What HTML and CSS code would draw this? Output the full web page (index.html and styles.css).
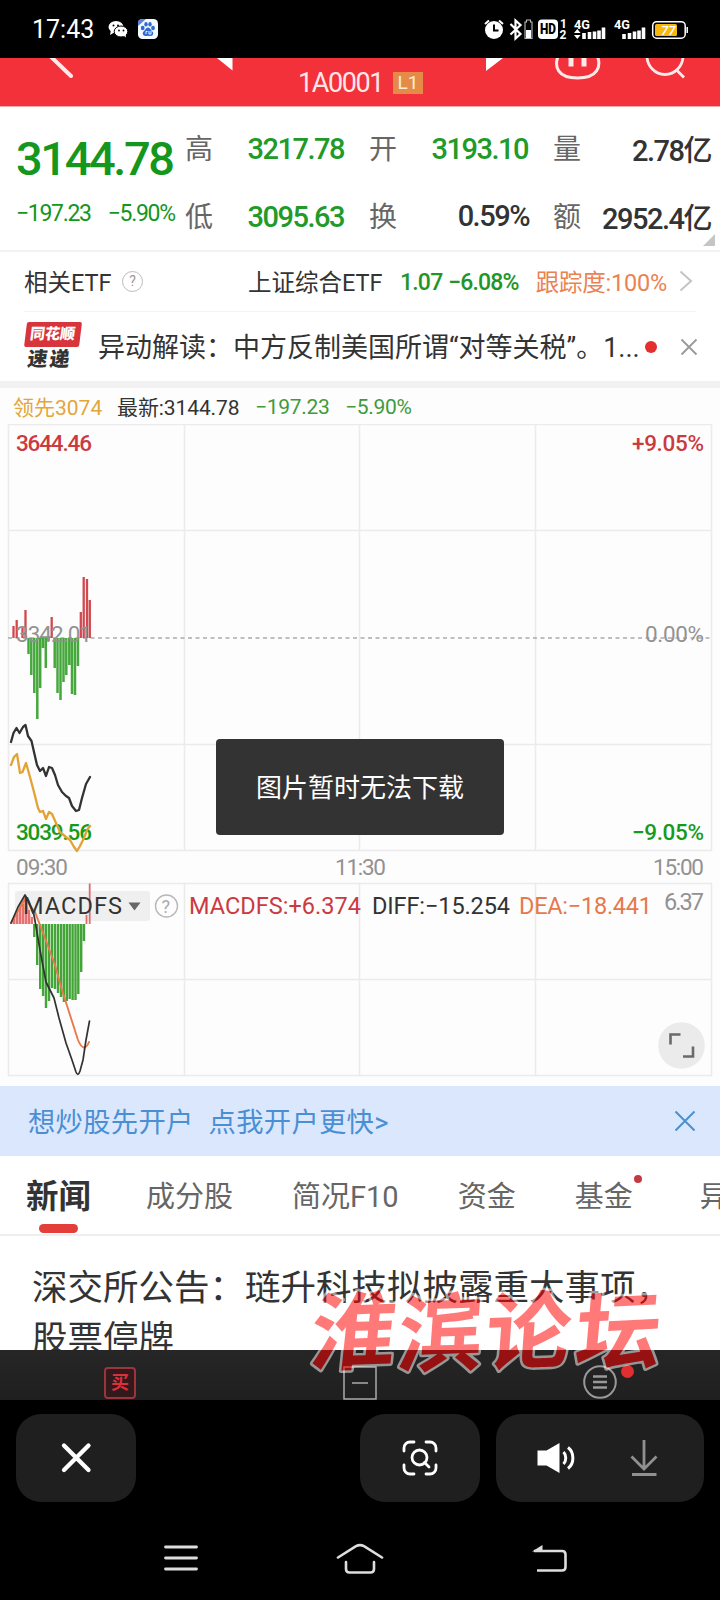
FILE: index.html
```html
<!DOCTYPE html>
<html lang="zh-CN">
<head>
<meta charset="utf-8">
<title>1A0001</title>
<link rel="stylesheet" href="styles.css">
</head>
<body>
<div class="screen">
  <header class="status">
    <span class="clock">17:43</span>
    <svg class="status-apps" width="52" height="22" viewBox="108 18 52 22">
      <ellipse cx="116" cy="27" rx="7.500" ry="6" fill="#fff"/><path d="M111 30l-1 5 5-3z" fill="#fff"/>
      <ellipse cx="121" cy="31.500" rx="6.800" ry="5.500" fill="#fff" stroke="#000" stroke-width="1"/><path d="M123 35l3 2.500-.5-4z" fill="#fff"/>
      <g fill="#000"><circle cx="113.500" cy="25.500" r="1"/><circle cx="118" cy="25.500" r="1"/><circle cx="119" cy="30.500" r=".9"/><circle cx="123.500" cy="30.500" r=".9"/></g>
      <rect x="138" y="19" width="20" height="20" rx="4.500" fill="#f4f8ff"/>
      <path d="M138 26v-3a4 4 0 0 1 4-4h4z" fill="#5a86d8"/>
      <g fill="#2f6bd0"><ellipse cx="142.700" cy="28" rx="1.900" ry="2.300"/><ellipse cx="146" cy="24.300" rx="1.700" ry="2.300"/><ellipse cx="150" cy="24.300" rx="1.700" ry="2.300"/><ellipse cx="153" cy="28" rx="1.900" ry="2.300"/><path d="M148 27.500c2 0 3 3 5 4.500 1 3-1 4.500-5 3.700-4 .8-6-.7-5-3.700 2-1.500 3-4.500 5-4.500z"/></g>
      <path d="M146 34v-2.500h1.500M149 31v3h2v-3" fill="none" stroke="#fff" stroke-width=".9"/>
    </svg>
    <svg class="status-signals" width="210" height="24" viewBox="482 17 210 24">
      <circle cx="494" cy="30" r="9" fill="#fff"/><path d="M494 24.500v6h4.500" stroke="#000" stroke-width="2" fill="none"/>
      <path d="M485 24l4-3.500M503 24l-4-3.500" stroke="#fff" stroke-width="2"/>
      <path d="M510.500 24l10 10-5 4.500V20.500l5 4.500-10 9.500" fill="none" stroke="#fff" stroke-width="2.200"/>
      <path d="M525 38.500V22h1.500v-2h4v2h1.500v16.500z" fill="none" stroke="#bbb" stroke-width="1.100"/><path d="M526 30h5v8h-5z" fill="#fff"/>
      <rect x="538" y="19.500" width="20" height="19.500" rx="4" fill="#fff"/>
      <text class="hd" x="540" y="34" textLength="16" lengthAdjust="spacingAndGlyphs">HD</text>
      <text class="sim" x="560" y="28">1</text><text class="sim" x="559.500" y="39">2</text>
      <text class="net" x="574" y="29" textLength="16" lengthAdjust="spacingAndGlyphs">4G</text>
      <text class="net" x="614" y="29" textLength="16" lengthAdjust="spacingAndGlyphs">4G</text>
      <path d="M574 33l3.300-4 3.300 4zM574 35l3.300 4 3.300-4z" fill="#fff"/>
      <path d="M584 39v-6M589.500 39v-7M594.500 39v-7.500M599 39v-8.500M603.500 39v-11.500M624 39v-5M629.500 39v-6M634.500 39v-7.500M639 39v-8.500M643.500 39v-11.500" stroke="#fff" stroke-width="3.600"/>
      <rect x="652.700" y="21.700" width="32.500" height="16.500" rx="4" fill="none" stroke="#fff" stroke-width="1.500"/>
      <rect x="655" y="24" width="22" height="12" rx="1.500" fill="#f6b70f"/><path d="M687.200 27v6" stroke="#fff" stroke-width="1.500"/>
      <text class="pct" x="661" y="35">77</text>
    </svg>
  </header>

  <div class="titlebar">
    <svg class="titlebar-icons" width="720" height="24" viewBox="0 58 720 24" fill="none" stroke="#ffe9e9">
      <path d="M45 51L71 76" stroke-width="4" stroke-linecap="round"/>
      <path d="M217 58h15.500v12.500zM486 58h17l-17 13z" fill="#fff" stroke="none"/>
      <path d="M559 54c-6 13-1 24 18.500 24s25-11 19-24" stroke-width="3"/>
      <path d="M571 58v8.500M584 58v8.500" stroke-width="5"/>
      <path d="M647 56a18 18.500 0 0 0 36 0M676 69.500l8 8" stroke-width="2.800"/>
    </svg>
    <span class="code">1A0001</span><span class="level">L1</span>
  </div>

  <section class="quote">
    <div class="price">
      <div class="price-now">3144.78</div>
      <div class="price-change"><span>−197.23</span><span>−5.90%</span></div>
    </div>
    <dl class="stats">
      <div><dt>高</dt><dd class="down">3217.78</dd></div>
      <div><dt>开</dt><dd class="down">3193.10</dd></div>
      <div><dt>量</dt><dd>2.78亿</dd></div>
      <div><dt>低</dt><dd class="down">3095.63</dd></div>
      <div><dt>换</dt><dd>0.59%</dd></div>
      <div><dt>额</dt><dd>2952.4亿</dd></div>
    </dl>
    <i class="corner"></i>
  </section>

  <section class="etf">
    <span class="etf-label">相关ETF</span><span class="help">?</span>
    <span class="etf-name">上证综合ETF</span>
    <span class="etf-num etf-price">1.07</span><span class="etf-num">−6.08%</span>
    <span class="etf-track">跟踪度:100%</span>
    <svg class="chevron" width="14" height="22" viewBox="0 0 14 22" fill="none" stroke="#c4c4c4" stroke-width="2"><path d="M1.500 1.500L12 11 1.500 20.500"/></svg>
  </section>

  <section class="flash">
    <div class="flash-logo"><b class="flash-brand">同花顺</b><b class="flash-sub">速递</b></div>
    <span class="flash-title">异动解读：中方反制美国所谓“对等关税”。1...</span>
    <i class="flash-dot"></i>
    <svg class="flash-close" width="18" height="18" viewBox="0 0 18 18" stroke="#999" stroke-width="1.800"><path d="M1.500 1.500l15 15M16.500 1.500l-15 15"/></svg>
  </section>

  <div class="legend">
    <span class="lead">领先3074</span><span class="last">最新:3144.78</span><span class="chg">−197.23</span><span class="chg">−5.90%</span>
  </div>

  <div class="charts">
    <svg width="720" height="662" viewBox="0 424 720 662">
      <g class="grid-line">
        <path d="M8.500 424.500h703v426h-703zM184.500 424.500v426M359.500 424.500v426M535.500 424.500v426M8.500 530.500h703M8.500 744.500h703"/>
        <path d="M8.500 883.500h703v192h-703zM184.500 883.500v192M359.500 883.500v192M535.500 883.500v192M8.500 979.500h703"/>
      </g>
      <path d="M8 638h703" stroke="#aaa" stroke-width="1.300" stroke-dasharray="4 3.500"/>
      <path d="M13.500 638V626M16.700 638V620M22.500 638V628M25.500 638V610M51.700 638V617M80.800 638V612M83.700 638V577M87 638V579M89.800 638V600" stroke="#d0494f" stroke-width="2.300"/>
      <path d="M28.500 638V654M31.300 638V675M34.300 638V693M37.300 638V719M40.200 638V688M43 638V648M45.800 638V668M48.600 638V641M54.700 638V668M57.500 638V693M60.500 638V700M63.500 638V682M66.300 638V675M69.300 638V665M72 638V694M75 638V695M78 638V666" stroke="#46a83c" stroke-width="2.500"/>
      <path d="M11 742L13.500 733L16.500 728L19.500 733L23 727L25.500 725L28 736L31.500 741L34 752L37 765L40 771L43 768L46 776L49 767L52 768L55 775L58 785L62 792L66 796L69 798L72 806L76 811L79 810L82 798L86 784L90 777" class="line dark"/>
      <g class="ticks">
        <text x="16" y="451" textLength="76" class="up">3644.46</text>
        <text x="632" y="451" textLength="72" class="up">+9.05%</text>
        <text x="16" y="642" textLength="76">3342.01</text>
        <text x="645" y="642" textLength="59">0.00%</text>
        <text x="16" y="840" textLength="76" class="dn">3039.56</text>
        <text x="632" y="840" textLength="72" class="dn">−9.05%</text>
        <text x="16" y="875" textLength="52">09:30</text>
        <text x="335" y="875" textLength="51">11:30</text>
        <text x="653" y="875" textLength="51">15:00</text>
      </g>
      <path d="M11 765L14 757L17 754L20 773L22.500 772L26 763L30 777L34 792L38 808L40 812L43 811L46 819L49 812L52 814L56 823L60 832L66 837L70 840L74 847L77 851L80 846L84 838L87 830L90 826" class="line gold"/>

      <rect x="15" y="891" width="135" height="30" rx="3" fill="#efefef"/>
      <path d="M11 924L25 895L33 924z" fill="#f6b0b0"/>
      <path d="M14 924v-6M17 924v-12M20 924v-16M23 924v-20M26 924v-22M29 924v-14M32 924v-7M86.500 924v-9M89.700 924V883.500" stroke="#e36a6a" stroke-width="1.800"/>
      <path d="M34.300 924V937M37.200 924V965M40.200 924V989M43.100 924V996M46 924V1008M49 924V1001M52 924V988M55 924V989M58 924V993M61 924V997M63.900 924V1002M66.800 924V1001M69.700 924V999M72.600 924V1000M75.500 924V1000M78.300 924V994M81.200 924V972M84 924V941" stroke="#43a438" stroke-width="2.400"/>
      <path d="M11 923L25 899L35 912L45 938L55 965L62 990L70 1015L78 1040Q84 1054 89 1042" class="line coral"/>
      <path d="M11 923L18 907L25 895L29 902L34 915L40 950L46 982L49 988L54 998L59 1018L66 1043L72 1060L76 1072Q78 1077 80 1071L83 1060L86 1040L89.500 1021" class="line thin"/>
      <g class="macd">
        <text x="23" y="914" textLength="99" fill="#333">MACDFS</text>
        <path d="M128.500 902.500h12l-6 8z" fill="#666"/>
        <circle cx="166.500" cy="906" r="11" fill="none" stroke="#b8b8b8" stroke-width="1.400"/>
        <text x="161.500" y="912.500" class="q">?</text>
        <text x="189" y="914" textLength="172" fill="#cb3a40">MACDFS:+6.374</text>
        <text x="372" y="914" textLength="138" fill="#333">DIFF:−15.254</text>
        <text x="519" y="914" textLength="133" fill="#e57a4c">DEA:−18.441</text>
        <text x="664" y="910" textLength="40" fill="#929292">6.37</text>
      </g>
      <circle cx="681.500" cy="1045.500" r="23.300" fill="#ebebeb"/>
      <path d="M670.500 1044.500v-10h10M683 1056.500h10v-10" fill="none" stroke="#6a6a6a" stroke-width="2.600"/>
    </svg>
    <div class="toast">图片暂时无法下载</div>
  </div>

  <div class="banner">
    <span>想炒股先开户</span><span>点我开户更快&gt;</span>
    <svg class="banner-close" width="22" height="22" viewBox="0 0 22 22" stroke="#4a90d2" stroke-width="2"><path d="M1.500 1.500l19 19M20.500 1.500l-19 19"/></svg>
  </div>

  <nav class="tabs">
    <span class="tab active">新闻</span><span class="tab">成分股</span><span class="tab">简况F10</span><span class="tab">资金</span><span class="tab dotted">基金</span><span class="tab">异</span>
  </nav>

  <article class="news">深交所公告：琏升科技拟披露重大事项，股票停牌</article>

  <div class="tradebar">
    <span class="buy">买</span>
    <svg width="34" height="34" viewBox="0 0 34 34" fill="none" stroke="#aaa" stroke-width="1.500"><path d="M1 1h32v32H1zM9 17h16"/></svg>
    <svg width="46" height="36" viewBox="583 1364 46 36" class="more"><circle cx="600" cy="1382" r="15.800" fill="none" stroke="#999" stroke-width="2"/><path d="M593 1376.500h14M593 1382h14M593 1387.500h14" stroke="#999" stroke-width="2.400"/></svg>
    <i class="more-dot"></i>
  </div>

  <div class="viewer">
    <button class="pill"><svg width="32" height="32" viewBox="0 0 32 32" stroke="#fff" stroke-width="4.300" stroke-linecap="round"><path d="M4 3.500l24.500 24.500M28.500 3.500L4 28"/></svg></button>
    <button class="pill scan"><svg width="36" height="36" viewBox="0 0 36 36" fill="none" stroke="#fff" stroke-width="2.800" stroke-linecap="round"><path d="M2 11V8a6 6 0 0 1 6-6h4M24 2h4a6 6 0 0 1 6 6v3M34 25v3a6 6 0 0 1-6 6h-4M12 34H8a6 6 0 0 1-6-6v-3M22.500 22.500l4.500 4.500"/><circle cx="17.500" cy="17.500" r="7.500"/></svg></button>
    <div class="pill wide">
      <svg width="40" height="34" viewBox="0 0 40 34" fill="none" stroke="#fff" stroke-width="3"><path d="M1.500 9.500h9L23.500 2v30L10.500 24.500h-9z" fill="#fff" stroke="none"/><path d="M27.500 11c3 3 3 9 0 12M32 6.500c6.500 5 6.500 16 0 21"/></svg>
      <svg width="28" height="38" viewBox="0 0 28 38" fill="none" stroke="#909090" stroke-width="2.800"><path d="M14 1v28M1.500 17.500L14 30l12.500-12.500M2 35.500h24.500"/></svg>
    </div>
  </div>

  <div class="navbar">
    <svg width="34" height="28" viewBox="0 0 34 28" stroke="#ddd" stroke-width="2.800" stroke-linecap="round"><path d="M1.500 3h31M1.500 14h31M1.500 25h31"/></svg>
    <svg width="48" height="32" viewBox="0 0 48 32" fill="none" stroke="#ddd" stroke-width="2.600" stroke-linecap="round"><path d="M2 14.500L20 3.200Q24 1 28 3.200L46 14.500M10 19v7q0 3.500 3.500 3.500h21q3.500 0 3.500-3.500v-7"/></svg>
    <svg width="36" height="28" viewBox="0 0 36 28" fill="none" stroke="#ddd" stroke-width="2.600"><path d="M2 6h28q3.500 0 3.500 3.500V22q0 3.500-3.500 3.500H5"/><path d="M0 6.500L10.500 0v6.500z" fill="#ddd" stroke="none"/></svg>
  </div>

  <svg class="watermark" width="370" height="120" viewBox="300 1270 370 120">
    <text transform="translate(308 1364) skewX(-8) rotate(-2)">淮</text>
    <text transform="translate(396 1366) skewX(-6) rotate(-2)">滨</text>
    <text transform="translate(484 1364) skewX(-6) rotate(-2)">论</text>
    <text transform="translate(573 1365) skewX(-8) rotate(-3)">坛</text>
  </svg>
</div>
</body>
</html>
```
FILE: styles.css
```css
* { box-sizing: border-box; }
body { margin: 0; background: #000; font-family: Roboto, "Noto Sans CJK SC", sans-serif; color: #333; }
i { display: block; }
svg { display: block; flex: none; }
.screen { position: relative; width: 720px; height: 1600px; overflow: hidden; background: #000; display: flex; flex-direction: column; white-space: nowrap; }
.screen > * { flex: none; }

.status { height: 58px; display: flex; align-items: center; padding-left: 32px; }
.clock { width: 76px; font-size: 25px; color: #fff; letter-spacing: 0; }
.status-signals { margin-left: 322px; }
.status-signals text { fill: #fff; font-weight: 500; }
.status-signals .hd { fill: #000; font-size: 14px; font-weight: 900; }
.status-signals .sim { font-size: 12px; font-weight: 700; }
.status-signals .net { font-size: 13px; font-weight: 700; }
.status-signals .pct { font-size: 13px; font-style: italic; }

.titlebar { position: relative; height: 49px; background: #f2313b; border-bottom: 1px solid #f4a9a9; display: flex; align-items: center; padding: 2px 0 0 298px; }
.titlebar-icons { position: absolute; left: 0; top: 0; }
.code { width: 95px; font-size: 27px; color: #ffe7e7; letter-spacing: -1.400px; }
.level { width: 30px; height: 22px; background: #e58b48; color: #ffecd2; font-size: 19px; line-height: 22px; text-align: center; }

.quote { position: relative; height: 145px; background: #fff; border-bottom: 2px solid #f3f3f3; display: flex; padding-right: 8px; }
.price { width: 185px; padding: 20px 0 0 16px; color: #15961c; }
.price-now { height: 60px; line-height: 63px; font-size: 47px; font-weight: 500; letter-spacing: -2.400px; }
.price-change { margin-top: 10px; display: flex; gap: 17px; line-height: 33px; font-size: 23px; letter-spacing: -1.300px; }
.stats { margin: 0; padding-top: 7px; display: grid; grid-template-columns: 160px 160px 158px; grid-auto-rows: 68px; column-gap: 24px; }
.stats div { display: flex; justify-content: space-between; align-items: center; }
.stats dt { font-size: 28px; color: #666; padding-bottom: 3px; }
.stats dd { margin: 0; font-size: 29px; letter-spacing: -1.500px; font-weight: 500; }
.stats .down { color: #219a28; padding-right: 1px; padding-top: 1px; }
.corner { position: absolute; right: 5px; bottom: 4px; border-left: 12px solid transparent; border-bottom: 12px solid #c5c5c5; }

.etf { height: 60px; background: #fff; display: flex; align-items: center; padding: 0 0 2px 24px; font-size: 23.500px; background-image: linear-gradient(#f3f3f3, #f3f3f3); background-size: 672px 1px; background-position: 24px 100%; background-repeat: no-repeat; }
.etf-label { width: 98px; padding-bottom: 1px; }
.help { width: 21px; height: 21px; border: 1.500px solid #bbb; border-radius: 50%; font-size: 14px; line-height: 18px; text-align: center; color: #999; }
.etf-name { width: 152px; margin-left: 105px; padding-bottom: 1px; }
.etf-num { color: #1f9627; font-weight: 500; font-size: 23px; letter-spacing: -.8px; padding-top: 2px; }
.etf-price { width: 48px; }
.etf-track { width: 132px; margin-left: 17px; padding-bottom: 1px; color: #ea8252; letter-spacing: -.2px; }
.chevron { margin-left: 11px; }

.flash { height: 69px; background: #fff; display: flex; align-items: center; padding-left: 22px; }
.flash-logo { width: 58px; height: 50px; display: flex; flex-direction: column; align-items: center; transform: skewX(-7deg); }
.flash-brand { width: 55px; height: 25px; background: #d8343b; border-radius: 2px; color: #fff; font-size: 15px; line-height: 24px; text-align: center; font-weight: 900; }
.flash-sub { font-size: 20px; line-height: 24px; font-weight: 900; letter-spacing: 2px; }
.flash-title { width: 546px; padding: 0 0 3px 18px; font-size: 27px; }
.flash-dot { width: 12px; height: 12px; margin-left: 19px; border-radius: 50%; background: #e3302f; }
.flash-close { margin-left: 23px; }

.legend { height: 43px; background: #fdfdfd; border-top: 7px solid #f2f2f3; display: flex; align-items: center; padding-left: 13px; font-size: 21px; }
.lead { width: 104px; color: #e3a63a; }
.last { width: 138px; letter-spacing: -.1px; }
.chg { width: 90px; padding-top: 2px; color: #3f9a3c; letter-spacing: -.300px; }

.charts { position: relative; height: 662px; background: #fdfdfd; }
.grid-line path { fill: none; stroke: #ebebed; stroke-width: 1.500; }
.line { fill: none; stroke-width: 2.300; stroke-linejoin: round; stroke-linecap: round; }
.dark { stroke: #333; }
.gold { stroke: #e2a334; }
.coral { stroke: #ea7a4c; stroke-width: 1.900; }
.thin { stroke: #333; stroke-width: 1.700; }
.ticks text { font-size: 22.500px; fill: #929292; }
.ticks .up { fill: #cb3a40; font-weight: 500; }
.ticks .dn { fill: #159b1c; font-weight: 500; }
.macd text { font-size: 23.500px; }
.macd .q { font-size: 18px; fill: #aaa; }
.toast { position: absolute; left: 216px; top: 315px; width: 288px; height: 96px; border-radius: 4px; background: #333; color: #fff; font-size: 26px; line-height: 99px; text-align: center; }

.banner { height: 70px; background: #dae7fc; display: flex; align-items: center; gap: 15px; padding: 0 24px 0 28px; font-size: 27.300px; letter-spacing: .3px; color: #4a8fd3; }
.banner span { padding-bottom: 3px; }
.banner-close { margin-left: auto; }

.tabs { height: 80px; background: #fff; border-bottom: 2px solid #eee; display: flex; align-items: center; padding: 0 0 3px 26px; font-size: 29px; color: #666; overflow: hidden; }
.tab { position: relative; flex: none; margin-right: 59px; }
.tab.active { font-size: 32.500px; font-weight: 700; color: #333; margin-right: 55px; }
.tab.active::after { content: ""; position: absolute; left: 13px; top: 54px; width: 39px; height: 9px; border-radius: 5px; background: #e33e3a; }
.dotted { margin-right: 67px; }
.dotted::after { content: ""; position: absolute; right: -9px; top: 2px; width: 8px; height: 8px; border-radius: 50%; background: #c33a42; }

.news { height: 114px; padding: 27px 30px 0 32px; overflow: hidden; background: #fff; font-size: 35.500px; line-height: 51px; white-space: normal; }

.tradebar { position: relative; height: 50px; background: linear-gradient(#262626, #1f1f1f); display: flex; align-items: flex-end; padding-left: 104px; }
.buy { width: 32px; height: 32px; margin: 0 207px 1px 0; border: 2px solid #9a353c; border-radius: 4px; color: #dc2f3c; background: #321a1c; font-size: 18px; line-height: 27px; text-align: center; font-weight: 700; }
.more { margin-left: 206px; }
.more-dot { position: absolute; left: 621px; top: 15px; width: 13px; height: 13px; border-radius: 50%; background: #df302f; }

.viewer { height: 102px; padding: 14px 16px 0; display: flex; }
.pill { width: 120px; height: 88px; padding: 0; border: 0; border-radius: 25px; background: #1f1f1f; display: flex; align-items: center; justify-content: center; }
.scan { margin: 0 16px 0 224px; }
.wide { width: 208px; gap: 54px; padding-right: 7px; }

.navbar { height: 98px; display: flex; align-items: flex-start; padding: 42px 0 0 164px; }
.navbar svg:nth-child(2) { margin: -1px 0 0 138px; }
.navbar svg:nth-child(3) { margin: 1px 0 0 148px; }

.watermark { position: absolute; left: 300px; top: 1270px; opacity: .52; }
.watermark text { font-size: 85px; font-weight: 700; fill: #f00; stroke: #fff; stroke-width: 5px; stroke-linejoin: round; paint-order: stroke; }
```
